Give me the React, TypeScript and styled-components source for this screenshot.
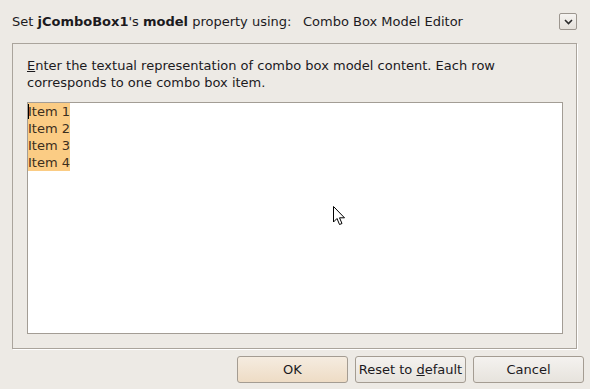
import React from 'react';
import styled, { createGlobalStyle } from 'styled-components';

const GlobalStyle = createGlobalStyle`
  html, body {
    margin: 0;
    padding: 0;
    background: #edeae5;
    font-family: "DejaVu Sans", "Liberation Sans", sans-serif;
    font-size: 13px;
    color: #1c1a1e;
  }
`;

const Dialog = styled.div`
  width: 590px;
  height: 389px;
  box-sizing: border-box;
  position: relative;
  display: flex;
  flex-direction: column;
  overflow: hidden;
`;

const Header = styled.div`
  display: flex;
  align-items: center;
  height: 17px;
  margin: 13px 13px 13px 12px;
`;

const Title = styled.div`
  width: 291px;
  white-space: nowrap;
`;

const EditorName = styled.div`
  flex: 1;
  white-space: nowrap;
`;

const DropButton = styled.div`
  width: 16px;
  height: 15px;
  border: 1px solid #9c968f;
  border-radius: 2px;
  background: linear-gradient(#f6f4f1, #e4e0da);
  display: flex;
  align-items: center;
  justify-content: center;
`;

const Panel = styled.div`
  margin-left: 12px;
  width: 565px;
  height: 306px;
  border: 1px solid #aaa49c;
  box-shadow: 1px 1px 0 #ffffff;
  padding: 13px 13px 14px 14px;
  box-sizing: border-box;
  display: flex;
  flex-direction: column;
`;

const Label = styled.div`
  line-height: 17px;
  white-space: nowrap;
  margin-bottom: 11px;
`;

const Mnemonic = styled.span`
  text-decoration: underline;
`;

const TextArea = styled.div`
  height: 232px;
  box-sizing: border-box;
  background: #ffffff;
  border: 1px solid #a39d95;
  position: relative;
`;

const Selection = styled.div`
  display: inline-block;
  background: #fbcc84;
  line-height: 17px;
  color: #3c2f1e;
`;

const Caret = styled.div`
  position: absolute;
  left: 0;
  top: 1px;
  width: 1px;
  height: 15px;
  background: #000000;
`;

const ButtonRow = styled.div`
  display: flex;
  justify-content: flex-end;
  gap: 7px;
  margin: 7px 6px 0 0;
`;

const Button = styled.div<{ $default?: boolean }>`
  width: 109px;
  height: 25px;
  border: 1px solid #a49c92;
  border-radius: 3px;
  display: flex;
  align-items: center;
  justify-content: center;
  background: ${(p) =>
    p.$default
      ? 'linear-gradient(#f5ece0, #eedcc5)'
      : 'linear-gradient(#f4f2ef, #e7e3dd)'};
  white-space: nowrap;
`;

const Pointer = styled.svg`
  position: absolute;
  left: 333px;
  top: 206px;
`;

export default function App() {
  const items = ['Item 1', 'Item 2', 'Item 3', 'Item 4'];
  return (
    <Dialog>
      <GlobalStyle />
      <Header>
        <Title>
          Set <b>jComboBox1</b>'s <b>model</b> property using:
        </Title>
        <EditorName>Combo Box Model Editor</EditorName>
        <DropButton>
          <svg width="9" height="6" viewBox="0 0 9 6">
            <path d="M1 1 L4.5 4.5 L8 1" fill="none" stroke="#2b2b2b" strokeWidth="1.6" />
          </svg>
        </DropButton>
      </Header>
      <Panel>
        <Label>
          <Mnemonic>E</Mnemonic>nter the textual representation of combo box model content. Each row
          <br />
          corresponds to one combo box item.
        </Label>
        <TextArea>
          <Selection>
            {items.map((it) => (
              <div key={it}>{it}</div>
            ))}
          </Selection>
          <Caret />
        </TextArea>
      </Panel>
      <ButtonRow>
        <Button $default>OK</Button>
        <Button>
          Reset to&nbsp;<Mnemonic>d</Mnemonic>efault
        </Button>
        <Button>Cancel</Button>
      </ButtonRow>
      <Pointer width="13" height="21" viewBox="0 0 13 21">
        <path
          d="M0.5 0.5 L0.5 16 L4 12.5 L6.5 18.5 L9 17.5 L6.5 11.8 L11.5 11.8 Z"
          fill="#ffffff"
          stroke="#000000"
          strokeWidth="1"
          strokeLinejoin="miter"
        />
      </Pointer>
    </Dialog>
  );
}
